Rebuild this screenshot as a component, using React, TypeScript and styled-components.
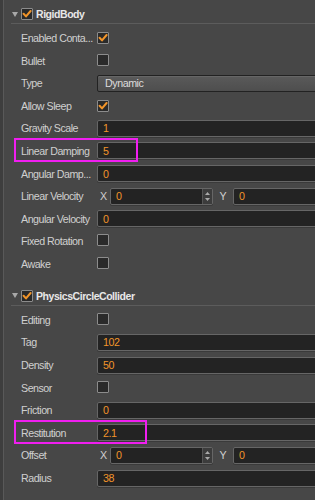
import React from 'react';
import styled, { createGlobalStyle } from 'styled-components';

const GlobalStyle = createGlobalStyle`
  html, body {
    margin: 0;
    padding: 0;
    background: #474747;
  }
  body {
    font-family: "Liberation Sans", Arial, sans-serif;
  }
`;

const ROW_H = 22.6;
const ORANGE = '#f2952a';

type Field =
  | { kind: 'check'; label: string; checked: boolean }
  | { kind: 'text'; label: string; value: string; mark?: number }
  | { kind: 'select'; label: string; value: string }
  | { kind: 'vector'; label: string; x: string; y: string };

const rigidBody: Field[] = [
  { kind: 'check', label: 'Enabled Conta...', checked: true },
  { kind: 'check', label: 'Bullet', checked: false },
  { kind: 'select', label: 'Type', value: 'Dynamic' },
  { kind: 'check', label: 'Allow Sleep', checked: true },
  { kind: 'text', label: 'Gravity Scale', value: '1' },
  { kind: 'text', label: 'Linear Damping', value: '5', mark: 124 },
  { kind: 'text', label: 'Angular Damp...', value: '0' },
  { kind: 'vector', label: 'Linear Velocity', x: '0', y: '0' },
  { kind: 'text', label: 'Angular Velocity', value: '0' },
  { kind: 'check', label: 'Fixed Rotation', checked: false },
  { kind: 'check', label: 'Awake', checked: false },
];

const collider: Field[] = [
  { kind: 'check', label: 'Editing', checked: false },
  { kind: 'text', label: 'Tag', value: '102' },
  { kind: 'text', label: 'Density', value: '50' },
  { kind: 'check', label: 'Sensor', checked: false },
  { kind: 'text', label: 'Friction', value: '0' },
  { kind: 'text', label: 'Restitution', value: '2.1', mark: 133 },
  { kind: 'vector', label: 'Offset', x: '0', y: '0' },
  { kind: 'text', label: 'Radius', value: '38' },
];

const Panel = styled.div`
  position: relative;
  width: 315px;
  height: 500px;
  overflow: hidden;
  box-sizing: border-box;
  padding-top: 5px;
  background: #474747;
  border-left: 3px solid #3e3e3e;
  box-shadow: inset 1px 0 0 #595959;
`;

const Section = styled.section<{ $first?: boolean }>`
  display: flex;
  flex-direction: column;
  margin-top: ${(p) => (p.$first ? '0' : '11.7px')};
`;

const Header = styled.div`
  display: flex;
  align-items: center;
  height: 18px;
  margin-left: 8px;
  padding-left: 1px;
  border-bottom: 1px solid #5c5c5c;
  margin-bottom: 2.7px;
`;

const Arrow = styled.svg`
  width: 6px;
  height: 5px;
  margin-right: 3px;
`;

const Title = styled.span`
  margin-left: 3px;
  font-size: 10.5px;
  font-weight: 700;
  letter-spacing: -0.45px;
  color: #e8e8e8;
`;

const Row = styled.div`
  position: relative;
  display: grid;
  grid-template-columns: 76px 1fr;
  align-items: center;
  height: ${ROW_H}px;
  padding-left: 18px;
`;

const Label = styled.span`
  font-size: 10.7px;
  letter-spacing: -0.5px;
  color: #d0d0d0;
  white-space: nowrap;
`;

const Box = styled.span`
  display: inline-flex;
  align-items: center;
  justify-content: center;
  width: 12px;
  height: 12px;
  box-sizing: border-box;
  border: 1px solid #8c8c8c;
  border-radius: 1px;
  background: #2a2a2a;
`;

const Input = styled.div<{ $w?: number }>`
  display: flex;
  align-items: center;
  height: 17px;
  box-sizing: border-box;
  ${(p) => (p.$w ? `width: ${p.$w}px;` : 'margin-right: -12px;')}
  flex: ${(p) => (p.$w ? '0 0 auto' : '1')};
  padding-left: 5px;
  border: 1px solid #666;
  border-radius: 2px;
  background: #232323;
  box-shadow: 0 1px 0 #3a3a3a;
`;

const Value = styled.span`
  flex: 1;
  font-size: 10.7px;
  letter-spacing: -0.45px;
  color: ${ORANGE};
`;

const Select = styled.div`
  display: flex;
  align-items: center;
  height: 17px;
  box-sizing: border-box;
  margin-right: -12px;
  padding-left: 7px;
  border: 1px solid #222;
  border-radius: 2px;
  background: linear-gradient(#5a5a5a, #4e4e4e);
  box-shadow: inset 0 1px 0 #666;
  font-size: 10.7px;
  letter-spacing: -0.45px;
  color: #dcdcdc;
`;

const Vector = styled.div`
  display: flex;
  align-items: center;
`;

const Axis = styled.span<{ $w: number }>`
  width: ${(p) => p.$w}px;
  text-align: center;
  font-size: 10.7px;
  color: #d0d0d0;
`;

const Spinner = styled.div`
  display: flex;
  flex-direction: column;
  align-items: center;
  justify-content: space-evenly;
  align-self: stretch;
  width: 9px;
  border-left: 1px solid #555;
  background: #3c3c3c;
`;

const Highlight = styled.div<{ $w: number }>`
  position: absolute;
  left: 11px;
  top: -1.7px;
  width: ${(p) => p.$w}px;
  height: 24px;
  box-sizing: border-box;
  border: 2px solid #f01ef0;
  pointer-events: none;
`;

const Check = ({ on }: { on: boolean }) => (
  <Box>
    {on && (
      <svg width="10" height="10" viewBox="0 0 10 10">
        <polyline points="1.6,4.8 4,7.4 8.6,2" fill="none" stroke={ORANGE} strokeWidth="2" strokeLinecap="round" strokeLinejoin="round" />
      </svg>
    )}
  </Box>
);

const Tri = ({ up }: { up?: boolean }) => (
  <svg width="5" height="3" viewBox="0 0 5 3">
    <polygon points={up ? '0,3 5,3 2.5,0' : '0,0 5,0 2.5,3'} fill="#aaa" />
  </svg>
);

const FieldRow = ({ f }: { f: Field }) => (
  <Row>
    <Label>{f.label}</Label>
    {f.kind === 'check' && <div><Check on={f.checked} /></div>}
    {f.kind === 'text' && (
      <Input>
        <Value>{f.value}</Value>
      </Input>
    )}
    {f.kind === 'select' && <Select>{f.value}</Select>}
    {f.kind === 'vector' && (
      <Vector>
        <Axis $w={13}>X</Axis>
        <Input $w={103} style={{ paddingRight: 0 }}>
          <Value>{f.x}</Value>
          <Spinner>
            <Tri up />
            <Tri />
          </Spinner>
        </Input>
        <Axis $w={20}>Y</Axis>
        <Input>
          <Value>{f.y}</Value>
        </Input>
      </Vector>
    )}
    {f.kind === 'text' && f.mark && <Highlight $w={f.mark} />}
  </Row>
);

const Component = ({ title, fields, first }: { title: string; fields: Field[]; first?: boolean }) => (
  <Section $first={first}>
    <Header>
      <Arrow viewBox="0 0 6 5">
        <polygon points="0,0 6,0 3,5" fill="#a8a8a8" />
      </Arrow>
      <Check on />
      <Title>{title}</Title>
    </Header>
    {fields.map((f) => (
      <FieldRow key={f.label} f={f} />
    ))}
  </Section>
);

export default function App() {
  return (
    <>
      <GlobalStyle />
      <Panel>
        <Component title="RigidBody" fields={rigidBody} first />
        <Component title="PhysicsCircleCollider" fields={collider} />
      </Panel>
    </>
  );
}
